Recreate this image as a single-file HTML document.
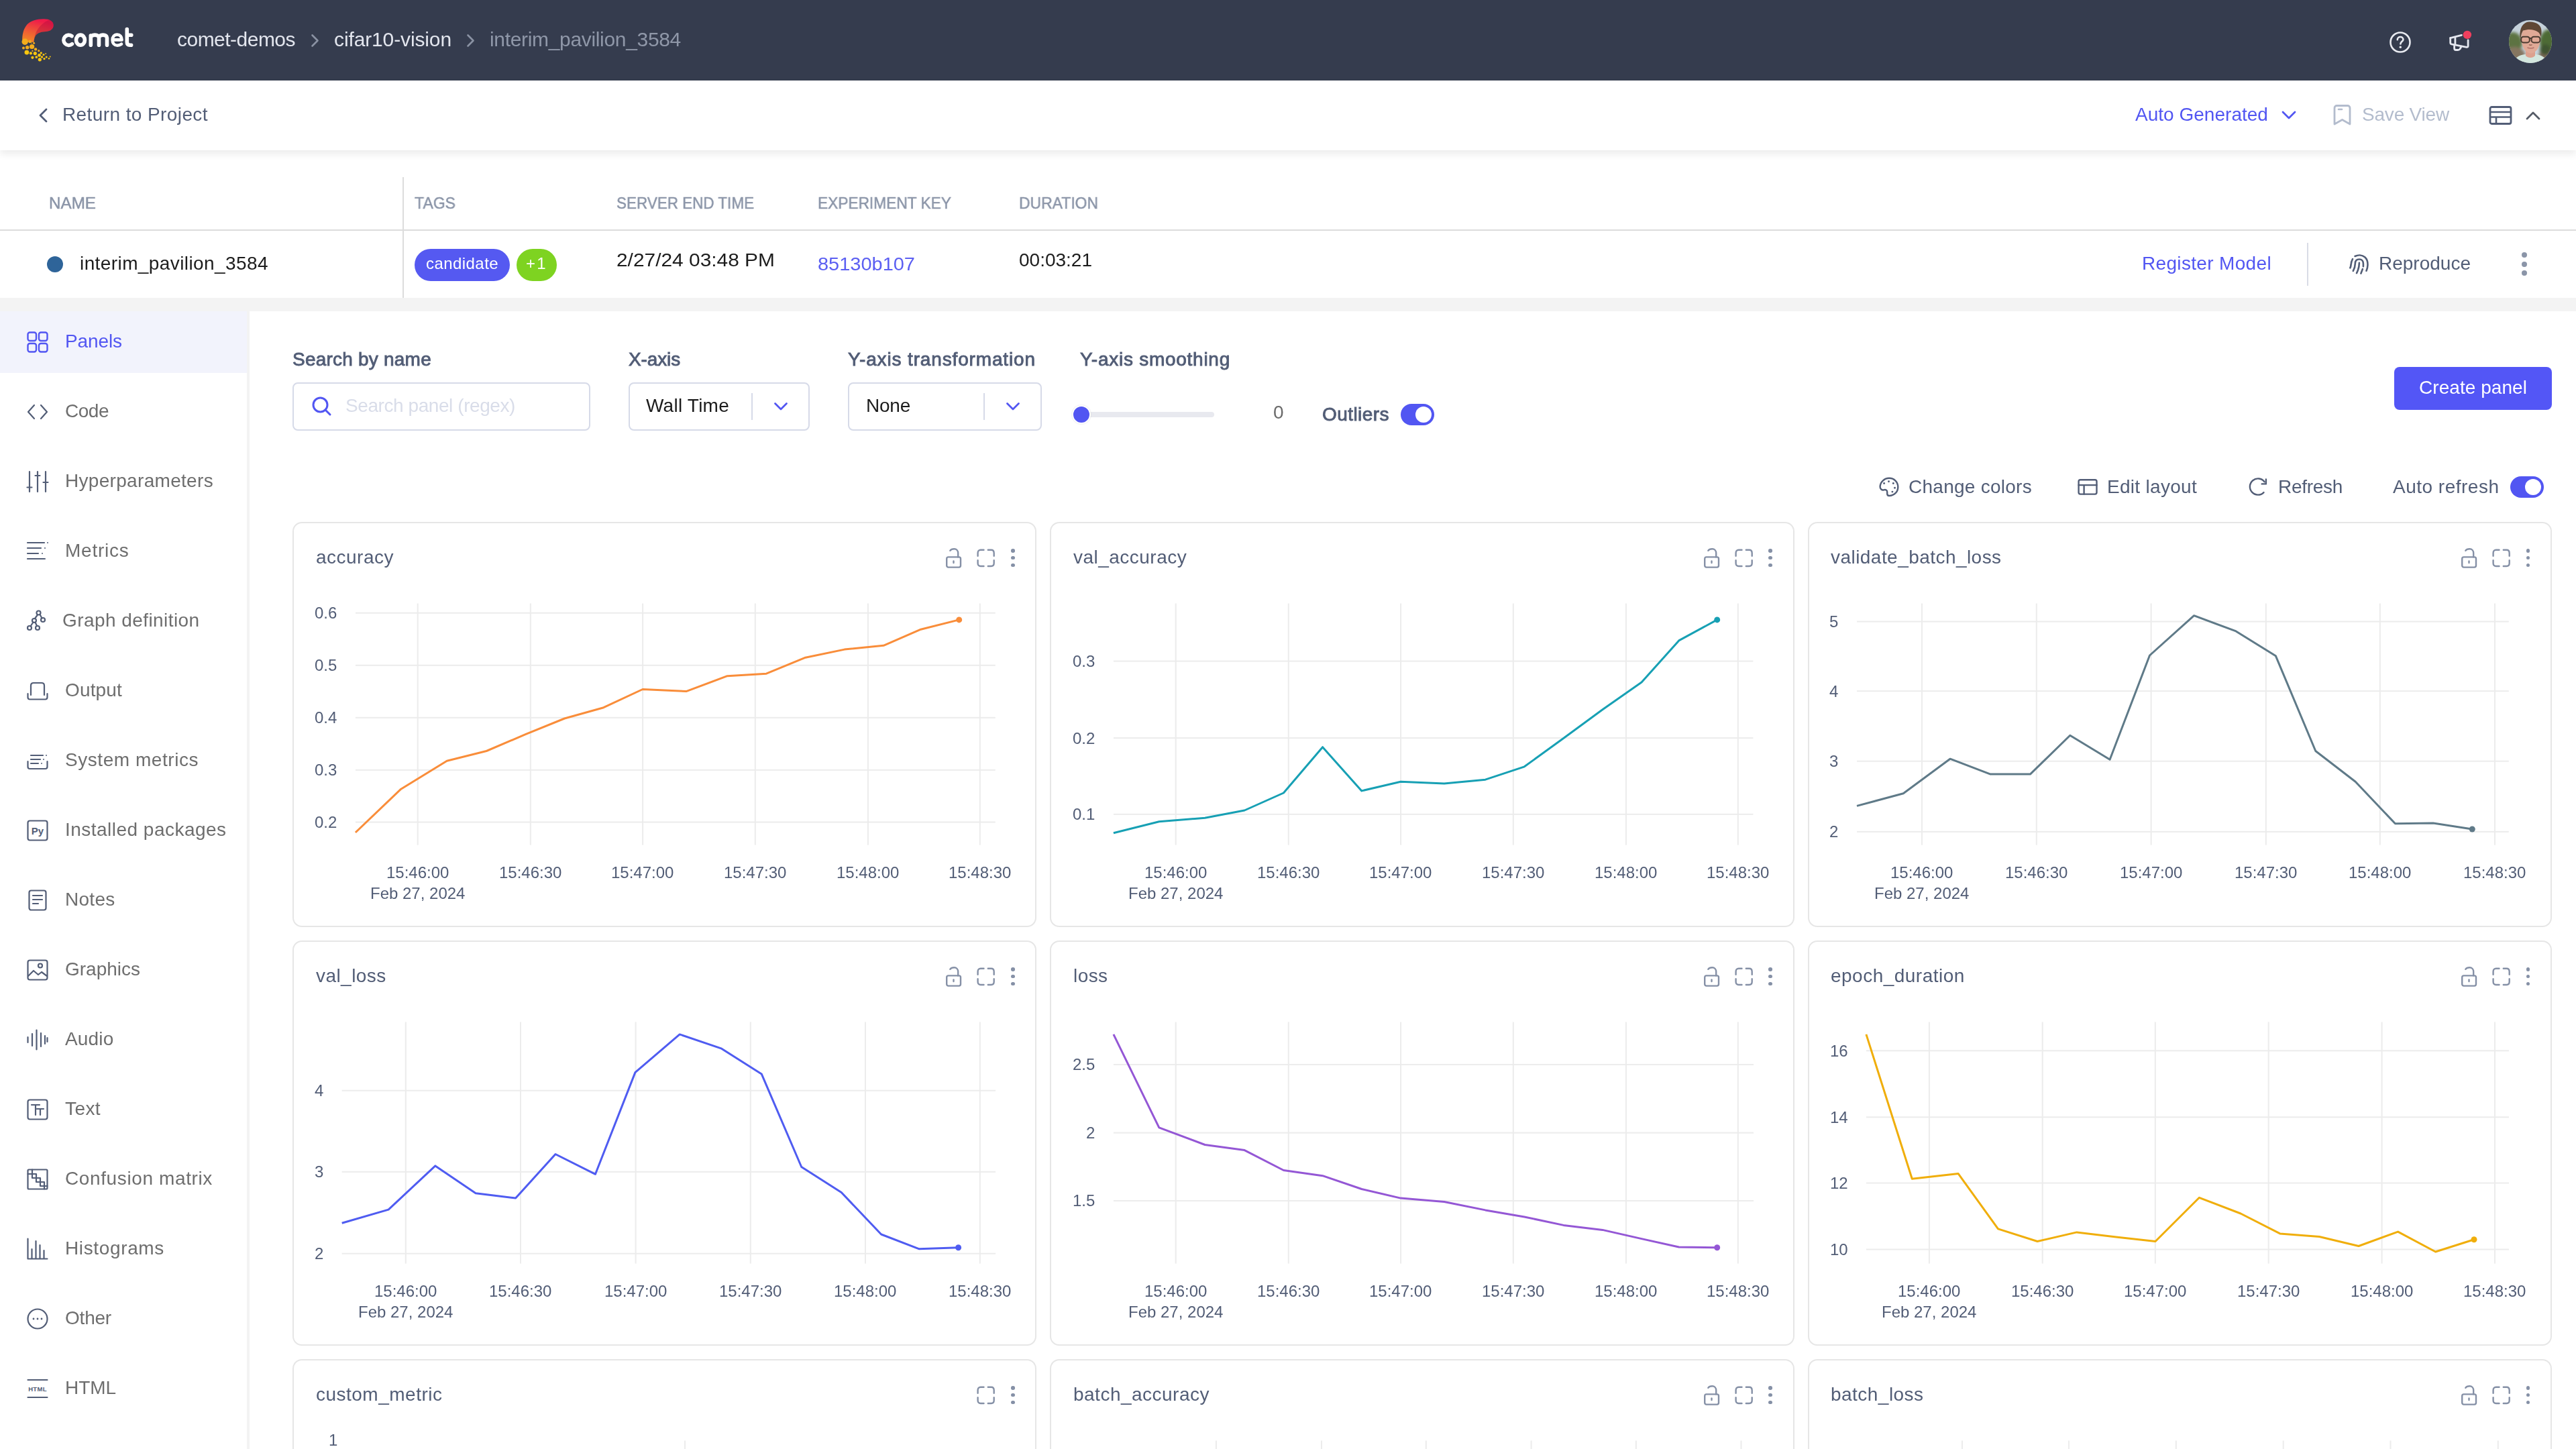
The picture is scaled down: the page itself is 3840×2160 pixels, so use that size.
<!DOCTYPE html>
<html><head><meta charset="utf-8"><title>Comet</title>
<style>
html,body{margin:0;padding:0;}
@media (max-width:1921px){html{zoom:0.5;}}
body{width:3840px;height:2160px;overflow:hidden;position:relative;background:#fff;font-family:"Liberation Sans",sans-serif;}
.a{position:absolute;}
.t{position:absolute;white-space:nowrap;will-change:transform;}
svg.a{overflow:visible;}
</style></head><body>
<div class="a" style="left:0px;top:0px;width:3840px;height:120px;background:#353c4e;"></div>
<svg class="a" style="left:0px;top:0px;" width="100" height="100" viewBox="0 0 100 100" fill="none"><defs><linearGradient id="lg" x1="0" y1="1" x2="0.35" y2="0"><stop offset="0" stop-color="#f39121"/><stop offset="0.5" stop-color="#ef5a35"/><stop offset="1" stop-color="#ee1b4a"/></linearGradient></defs><path d="M33.2 62 C33 52 34.5 44 40 37 C45 31 54 28.2 65.3 28.2 C73.5 28.2 79.7 31.5 79.7 37.5 C79.7 43 75.5 46.5 69 46.9 C60 47.2 54.5 49.5 52.5 54 C51 57 50.6 60 50.4 63 Z" fill="url(#lg)"/><path d="M72.7 29.5 C78 31 79.7 34 79.7 37.5 C79.7 43 75.5 46.5 69 46.9 C60 47.2 54.5 49.5 52.5 54 C51.5 56 51 58 50.8 60 C52 48 58 37 72.7 29.5 Z" fill="#b5103c" opacity="0.45"/><circle cx="37.2" cy="62.3" r="4.7" fill="#f3ad1d"/><circle cx="44.6" cy="62" r="2.2" fill="#f3ad1d"/><circle cx="50.6" cy="64.2" r="1.5" fill="#f3ad1d"/><circle cx="47.1" cy="64.2" r="0.8" fill="#f3ad1d"/><circle cx="35" cy="71.4" r="2" fill="#f3ad1d"/><circle cx="40.7" cy="70.7" r="2.7" fill="#f3ad1d"/><circle cx="47.6" cy="69.5" r="3.6" fill="#f3ad1d"/><circle cx="53.1" cy="73.4" r="2.2" fill="#f3ad1d"/><circle cx="48.4" cy="75.9" r="1.1" fill="#f3ad1d"/><circle cx="57.8" cy="75.7" r="1.6" fill="#f3ad1d"/><circle cx="39.9" cy="78.1" r="3.4" fill="#fbc70f"/><circle cx="45.9" cy="79.4" r="2.1" fill="#fbc70f"/><circle cx="52.3" cy="79.6" r="2.6" fill="#fbc70f"/><circle cx="61.3" cy="78.9" r="1.6" fill="#fbc70f"/><circle cx="68.2" cy="79.9" r="0.9" fill="#fbc70f"/><circle cx="58.6" cy="82.4" r="2.4" fill="#fbc70f"/><circle cx="65" cy="81.4" r="1.5" fill="#fbc70f"/><circle cx="54.3" cy="85.1" r="1.9" fill="#fbc70f"/><circle cx="62.5" cy="84.9" r="1.7" fill="#fbc70f"/><circle cx="69.2" cy="85.1" r="1.5" fill="#fbc70f"/><circle cx="74.7" cy="84.4" r="1.0" fill="#fbc70f"/><circle cx="48.4" cy="85.8" r="2.1" fill="#fbc70f"/><circle cx="59.3" cy="88.8" r="2.6" fill="#fbc70f"/><circle cx="66" cy="87.6" r="1.6" fill="#fbc70f"/><circle cx="73" cy="87.3" r="1.2" fill="#fbc70f"/></svg>
<svg class="a" style="left:88px;top:36px;" width="116" height="40" viewBox="0 0 116 40" fill="none"><g stroke="#ffffff" stroke-width="5.6" fill="none" stroke-linecap="round" stroke-linejoin="round"><path d="M19 17.8 A7.6 7.5 0 1 0 19.4 29.6"/><ellipse cx="31.95" cy="23.65" rx="6.45" ry="7.55"/><path d="M47.3 31.2 L47.3 17 M47.3 20.5 C47.3 17.8 49.5 16.1 53.4 16.1 C57.3 16.1 59.5 17.8 59.5 20.5 L59.5 31.2 M59.5 20.5 C59.5 17.8 61.7 16.1 65.5 16.1 C69.3 16.1 71.5 17.8 71.5 20.5 L71.5 31.2"/><path d="M79.8 23.4 L93.6 23.4 C93.6 18.8 90.8 15.6 86.65 15.6 C82.5 15.6 79.6 19 79.6 23.65 C79.6 28.5 82.6 31.7 87 31.7 C89.5 31.7 91.5 31 93 29.8" stroke-width="4.6"/><path d="M101.3 7.5 L101.3 26.5 C101.3 29.8 103 31.3 105.5 31.3 L107.6 31.3 M101.3 16.2 L107.8 16.2"/></g></svg>
<div class="t" style="left:264.00px;top:43.61px;font-size:30px;line-height:30px;color:#e3e6ee;letter-spacing:-0.520px;">comet-demos</div>
<svg class="a" style="left:464px;top:51px;" width="12" height="20" viewBox="0 0 12 20" fill="none"><path d="M1.5 1.5 L9.5 9.5 L1.5 17.5" stroke="#8a92a3" stroke-width="2.6" stroke-linecap="round" stroke-linejoin="round"/></svg>
<div class="t" style="left:498.00px;top:43.61px;font-size:30px;line-height:30px;color:#e3e6ee;letter-spacing:-0.125px;">cifar10-vision</div>
<svg class="a" style="left:696px;top:51px;" width="12" height="20" viewBox="0 0 12 20" fill="none"><path d="M1.5 1.5 L9.5 9.5 L1.5 17.5" stroke="#8a92a3" stroke-width="2.6" stroke-linecap="round" stroke-linejoin="round"/></svg>
<div class="t" style="left:730.00px;top:43.61px;font-size:30px;line-height:30px;color:#8f97a8;letter-spacing:-0.329px;">interim_pavilion_3584</div>
<svg class="a" style="left:3561px;top:46px;" width="34" height="34" viewBox="0 0 34 34" fill="none"><circle cx="17" cy="17" r="14.5" stroke="#e8eaf0" stroke-width="2.6"/><path d="M12.8 13.2 C12.8 10.6 14.8 9 17.2 9 C19.6 9 21.4 10.7 21.4 12.9 C21.4 15.6 17.4 16 17.4 19.4" stroke="#e8eaf0" stroke-width="2.6" stroke-linecap="round"/><circle cx="17.3" cy="24.2" r="1.7" fill="#e8eaf0"/></svg>
<svg class="a" style="left:3640px;top:40px;" width="50" height="45" viewBox="0 0 50 45" fill="none"><g stroke="#e4e7ef" stroke-width="2.8" fill="none" stroke-linecap="round" stroke-linejoin="round"><path d="M12.7 16.7 L29.5 12.4"/><path d="M12.7 16.7 L12.7 23.5 Q12.7 25.4 14.5 25.9 L37 30.4 Q39.1 30.5 39.1 28.5 L39.1 19.8"/><path d="M19.9 16 L19.9 26.5"/><path d="M18.6 27 L18.6 32 Q18.6 34.5 21 34.5 L24 34.5 Q26 34.5 27 33 L29.2 29.3"/></g><circle cx="37.9" cy="11.9" r="6.2" fill="#ef3f5e"/></svg>
<svg class="a" style="left:3740px;top:30px;" width="64" height="64" viewBox="0 0 64 64" fill="none"><defs><clipPath id="avc"><circle cx="32" cy="32" r="32"/></clipPath><filter id="avb" x="-20%" y="-20%" width="140%" height="140%"><feGaussianBlur stdDeviation="2.2"/></filter><filter id="avf" x="-10%" y="-10%" width="120%" height="120%"><feGaussianBlur stdDeviation="0.5"/></filter></defs><g clip-path="url(#avc)"><rect width="64" height="64" fill="#c6d2db"/><g filter="url(#avb)"><ellipse cx="6" cy="34" rx="14" ry="16" fill="#5d7342"/><ellipse cx="60" cy="32" rx="14" ry="18" fill="#4e6a36"/><ellipse cx="8" cy="52" rx="16" ry="12" fill="#857660"/><ellipse cx="58" cy="54" rx="14" ry="10" fill="#7c6a58"/><ellipse cx="54" cy="44" rx="8" ry="8" fill="#3f5530"/></g><g filter="url(#avf)"><path d="M4 66 C7 56 16 52 24 51 L40 51 C48 52 57 56 60 66 Z" fill="#d3e6de"/><path d="M25 44 L25 53 C28 57 36 57 39 53 L39 44 Z" fill="#dca08e"/><path d="M18.5 26 C18.5 14 24 11 32.5 11 C41 11 46.8 15 46.8 26 C46.8 40 40.5 49.5 32.5 49.5 C24.5 49.5 18.5 40 18.5 26 Z" fill="#e0a996"/><path d="M16.5 25 C15.5 12 21 3 30 2.5 C40 2 48.5 7 48.5 16 C48.6 20 48.4 23 47.5 25 C46.5 21 45 18.5 43 17.5 C38 14 30 12.5 21 15.5 C19.5 18 18 22 17.5 27 Z" fill="#5e4636"/><g stroke="#4b3a30" stroke-width="2" fill="none"><rect x="18.2" y="24.8" width="12.6" height="8.6" rx="3.5"/><rect x="33.6" y="24.8" width="12.8" height="8.6" rx="3.5"/><path d="M30.8 27 L33.6 27"/></g><path d="M30 36.5 C31.5 37.5 33 37.5 34.5 36.5" stroke="#8f5f52" stroke-width="1.4" fill="none"/><path d="M27.5 41 C30.5 42.2 34.5 42.2 37.5 41" stroke="#b0736a" stroke-width="1.6" fill="none"/></g></g></svg>
<div class="a" style="left:0;top:120px;width:3840px;height:104px;background:#fff;box-shadow:0 6px 10px rgba(0,0,0,0.075);z-index:2"></div>
<svg class="a" style="left:56px;top:160px;z-index:3" width="18" height="24" viewBox="0 0 18 24" fill="none"><path d="M13 3 L4 12 L13 21" stroke="#525d76" stroke-width="2.8" stroke-linecap="round" stroke-linejoin="round"/></svg>
<div class="t" style="left:92.50px;top:157.30px;font-size:28px;line-height:28px;color:#525d76;letter-spacing:0.403px;z-index:3">Return to Project</div>
<div class="t" style="left:3183.00px;top:156.80px;font-size:28px;line-height:28px;color:#5256f2;letter-spacing:0.018px;z-index:3">Auto Generated</div>
<svg class="a" style="left:3400px;top:163px;z-index:3" width="24" height="18" viewBox="0 0 24 18" fill="none"><path d="M3 4 L12 13 L21 4" stroke="#5256f2" stroke-width="2.8" stroke-linecap="round" stroke-linejoin="round"/></svg>
<svg class="a" style="left:3476px;top:155px;z-index:3" width="32" height="34" viewBox="0 0 32 34" fill="none"><path d="M4 6 C4 4 5.5 2.5 7.5 2.5 L23.5 2.5 C25.5 2.5 27 4 27 6 L27 30 L15.5 23.5 L4 30 Z" stroke="#b3bccd" stroke-width="2.8" stroke-linejoin="round"/><path d="M10 8 L15 8" stroke="#b3bccd" stroke-width="2.6" stroke-linecap="round"/></svg>
<div class="t" style="left:3520.50px;top:156.80px;font-size:28px;line-height:28px;color:#b3bccd;letter-spacing:-0.200px;z-index:3">Save View</div>
<svg class="a" style="left:3710px;top:157px;z-index:3" width="36" height="30" viewBox="0 0 36 30" fill="none"><rect x="2" y="2.5" width="31" height="25" rx="2.5" stroke="#525d76" stroke-width="2.8"/><path d="M2 10 L33 10 M2 17.5 L33 17.5 M11 17.5 L11 27.5" stroke="#525d76" stroke-width="2.6"/></svg>
<svg class="a" style="left:3764px;top:164px;z-index:3" width="24" height="16" viewBox="0 0 24 16" fill="none"><path d="M3 13 L12 4 L21 13" stroke="#555b66" stroke-width="2.8" stroke-linecap="round" stroke-linejoin="round"/></svg>
<div class="t" style="left:72.50px;top:290.68px;font-size:24px;line-height:24px;color:#8b95a8;-webkit-text-stroke:0.5px #8b95a8;transform:scaleX(1.0092);transform-origin:0 0;">NAME</div>
<div class="t" style="left:618.00px;top:290.68px;font-size:24px;line-height:24px;color:#8b95a8;-webkit-text-stroke:0.5px #8b95a8;transform:scaleX(0.9594);transform-origin:0 0;">TAGS</div>
<div class="t" style="left:919.00px;top:290.68px;font-size:24px;line-height:24px;color:#8b95a8;-webkit-text-stroke:0.5px #8b95a8;transform:scaleX(0.9352);transform-origin:0 0;">SERVER END TIME</div>
<div class="t" style="left:1219.00px;top:290.68px;font-size:24px;line-height:24px;color:#8b95a8;-webkit-text-stroke:0.5px #8b95a8;transform:scaleX(0.9461);transform-origin:0 0;">EXPERIMENT KEY</div>
<div class="t" style="left:1519.00px;top:290.68px;font-size:24px;line-height:24px;color:#8b95a8;-webkit-text-stroke:0.5px #8b95a8;transform:scaleX(0.9551);transform-origin:0 0;">DURATION</div>
<div class="a" style="left:0px;top:342px;width:3840px;height:2px;background:#dcdcdc;"></div>
<div class="a" style="left:600px;top:264px;width:2px;height:180px;background:#dcdcdc;"></div>
<div class="a" style="left:70px;top:382px;width:24px;height:24px;border-radius:50%;background:#2e6499"></div>
<div class="t" style="left:119.00px;top:379.30px;font-size:28px;line-height:28px;color:#1c1c1c;letter-spacing:0.406px;">interim_pavilion_3584</div>
<div class="a" style="left:618px;top:371px;width:142px;height:48px;border-radius:24px;background:#5559f1"></div>
<div class="t" style="left:635.00px;top:380.68px;font-size:24px;line-height:24px;color:#ffffff;letter-spacing:0.438px;">candidate</div>
<div class="a" style="left:770px;top:371px;width:60px;height:48px;border-radius:24px;background:#7ed321"></div>
<div class="t" style="left:784.00px;top:380.68px;font-size:24px;line-height:24px;color:#ffffff;letter-spacing:2.320px;">+1</div>
<div class="t" style="left:919.00px;top:373.80px;font-size:28px;line-height:28px;color:#1c1c1c;transform:scaleX(1.0673);transform-origin:0 0;">2/27/24 03:48 PM</div>
<div class="t" style="left:1219.00px;top:379.80px;font-size:28px;line-height:28px;color:#5b5ff2;transform:scaleX(1.0342);transform-origin:0 0;">85130b107</div>
<div class="t" style="left:1519.00px;top:373.80px;font-size:28px;line-height:28px;color:#1c1c1c;transform:scaleX(0.9997);transform-origin:0 0;">00:03:21</div>
<div class="t" style="left:3193.00px;top:379.30px;font-size:28px;line-height:28px;color:#5256f2;letter-spacing:0.333px;">Register Model</div>
<div class="a" style="left:3439px;top:362px;width:2px;height:64px;background:#d9dce6;"></div>
<svg class="a" style="left:3490px;top:360px;" width="70" height="60" viewBox="0 0 70 60" fill="none"><g stroke="#525d76" stroke-width="2.6" stroke-linecap="round" fill="none"><path d="M20.5 22 C25 19.8 31 19.8 35.2 23.2 C38.5 26 39.6 30 39.5 35 C39.4 38.5 38.7 41 37.5 43.7"/><path d="M17 26.1 C15.6 28.5 14.8 31.5 14.6 34.5 C14.4 36.5 14 38 13.3 39.4"/><path d="M17.8 43.9 C19.8 40.5 20.7 37.5 20.8 33 C20.8 29 23 26.5 26.9 26.5 C30.8 26.5 32.9 29.5 32.9 33 L32.9 37.3"/><path d="M26.9 31.9 C26.8 36 26.2 39.5 25 42.5 C24.3 44.3 23.7 45.8 23 47.2"/><path d="M31.9 41 L29.4 47.6"/></g></svg>
<div class="t" style="left:3546.00px;top:379.30px;font-size:28px;line-height:28px;color:#525d76;letter-spacing:-0.002px;">Reproduce</div>
<div class="a" style="left:3759px;top:376px;width:8px;height:8px;border-radius:50%;background:#8b95a8"></div>
<div class="a" style="left:3759px;top:390px;width:8px;height:8px;border-radius:50%;background:#8b95a8"></div>
<div class="a" style="left:3759px;top:403px;width:8px;height:8px;border-radius:50%;background:#8b95a8"></div>
<div class="a" style="left:0px;top:444px;width:3840px;height:20px;background:#f3f3f3;"></div>
<div class="a" style="left:368px;top:464px;width:4px;height:1696px;background:#f3f3f3;"></div>
<div class="a" style="left:0px;top:464px;width:368px;height:92px;background:#f2f3fc;"></div>
<svg class="a" style="left:40px;top:494px;" width="32" height="32" viewBox="0 0 32 32" fill="none"><g stroke="#5256f2" stroke-width="2.4" fill="none"><rect x="1.5" y="1.5" width="12.5" height="12.5" rx="3"/><rect x="18" y="1.5" width="12.5" height="12.5" rx="3"/><rect x="1.5" y="18" width="12.5" height="12.5" rx="3"/><rect x="18" y="18" width="12.5" height="12.5" rx="3"/></g></svg>
<div class="t" style="left:97.00px;top:495.05px;font-size:28px;line-height:28px;color:#5256f2;letter-spacing:-0.104px;">Panels</div>
<svg class="a" style="left:40px;top:598px;" width="32" height="32" viewBox="0 0 32 32" fill="none"><path d="M11 6 L2 16 L11 26 M21 6 L30 16 L21 26" stroke="#525d76" stroke-width="2.2" fill="none" stroke-linecap="round" stroke-linejoin="round" stroke-width="2.6"/></svg>
<div class="t" style="left:97.00px;top:599.05px;font-size:28px;line-height:28px;color:#6e6e6e;letter-spacing:-0.488px;">Code</div>
<svg class="a" style="left:40px;top:702px;" width="32" height="32" viewBox="0 0 32 32" fill="none"><path d="M4 1 L4 31 M16 1 L16 31 M28 1 L28 31 M0.5 24.5 L7.5 24.5 M12.5 7 L19.5 7 M24.5 17 L31.5 17" stroke="#525d76" stroke-width="2.2" fill="none" stroke-linecap="round" stroke-linejoin="round" stroke-linecap="butt"/></svg>
<div class="t" style="left:97.00px;top:703.05px;font-size:28px;line-height:28px;color:#6e6e6e;letter-spacing:0.309px;">Hyperparameters</div>
<svg class="a" style="left:40px;top:806px;" width="32" height="32" viewBox="0 0 32 32" fill="none"><path d="M1 3 L26 3 M1 11 L21 11 M1 19 L17 19 M1 27 L26 27" stroke="#525d76" stroke-width="2.2" fill="none" stroke-linecap="round" stroke-linejoin="round" stroke-width="2.6" stroke-linecap="butt"/><circle cx="31" cy="3" r="1" fill="#525d76"/><circle cx="27" cy="11" r="1" fill="#525d76"/><circle cx="23" cy="19" r="1" fill="#525d76"/><circle cx="27" cy="27" r="1" fill="#525d76"/></svg>
<div class="t" style="left:97.00px;top:807.05px;font-size:28px;line-height:28px;color:#6e6e6e;letter-spacing:0.752px;">Metrics</div>
<svg class="a" style="left:40px;top:910px;" width="32" height="32" viewBox="0 0 32 32" fill="none"><g stroke="#525d76" stroke-width="2.2" fill="none" stroke-linecap="round" stroke-linejoin="round" stroke-width="2"><circle cx="17.5" cy="3.5" r="3"/><circle cx="24" cy="14" r="3"/><circle cx="11" cy="15" r="3"/><circle cx="4" cy="26" r="3"/><circle cx="16" cy="26" r="3"/><path d="M16 6.5 L12 12 M19.5 6 L22.5 11.5 M9.5 17.5 L5.5 23.5 M12.5 17.5 L15 23"/></g></svg>
<div class="t" style="left:93.00px;top:911.05px;font-size:28px;line-height:28px;color:#6e6e6e;letter-spacing:0.429px;">Graph definition</div>
<svg class="a" style="left:40px;top:1014px;" width="32" height="32" viewBox="0 0 32 32" fill="none"><path d="M6 22 L6 8 C6 5.5 7.5 4 10 4 L22 4 C24.5 4 26 5.5 26 8 L26 22 M1.5 20 L1.5 25.5 C1.5 27.5 2.8 28.5 4.5 28.5 L27.5 28.5 C29.2 28.5 30.5 27.5 30.5 25.5 L30.5 20" stroke="#525d76" stroke-width="2.2" fill="none" stroke-linecap="round" stroke-linejoin="round"/></svg>
<div class="t" style="left:97.00px;top:1015.05px;font-size:28px;line-height:28px;color:#6e6e6e;letter-spacing:0.154px;">Output</div>
<svg class="a" style="left:40px;top:1118px;" width="32" height="32" viewBox="0 0 32 32" fill="none"><path d="M6 8 L24 8 M6 14 L20 14 M6 20 L17 20" stroke="#525d76" stroke-width="2.2" fill="none" stroke-linecap="round" stroke-linejoin="round" stroke-linecap="butt"/><path d="M1.5 17 L1.5 25 C1.5 27 2.8 28 4.5 28 L27.5 28 C29.2 28 30.5 27 30.5 25 L30.5 17" stroke="#525d76" stroke-width="2.2" fill="none" stroke-linecap="round" stroke-linejoin="round"/><circle cx="29" cy="8" r="1" fill="#525d76"/><circle cx="25" cy="14" r="1" fill="#525d76"/><circle cx="22" cy="20" r="1" fill="#525d76"/></svg>
<div class="t" style="left:97.00px;top:1119.05px;font-size:28px;line-height:28px;color:#6e6e6e;letter-spacing:0.545px;">System metrics</div>
<svg class="a" style="left:40px;top:1222px;" width="32" height="32" viewBox="0 0 32 32" fill="none"><rect x="1.5" y="1.5" width="29" height="29" rx="3" stroke="#525d76" stroke-width="2.2" fill="none" stroke-linecap="round" stroke-linejoin="round"/><text x="16" y="22" text-anchor="middle" font-family="Liberation Sans" font-weight="700" font-size="15" fill="#525d76">Py</text></svg>
<div class="t" style="left:97.00px;top:1223.05px;font-size:28px;line-height:28px;color:#6e6e6e;letter-spacing:0.479px;">Installed packages</div>
<svg class="a" style="left:40px;top:1326px;" width="32" height="32" viewBox="0 0 32 32" fill="none"><rect x="3.5" y="1.5" width="25" height="29" rx="3" stroke="#525d76" stroke-width="2.2" fill="none" stroke-linecap="round" stroke-linejoin="round"/><path d="M9 9 L23 9 M9 15 L23 15 M9 21 L17 21" stroke="#525d76" stroke-width="2.2" fill="none" stroke-linecap="round" stroke-linejoin="round"/></svg>
<div class="t" style="left:97.00px;top:1327.05px;font-size:28px;line-height:28px;color:#6e6e6e;letter-spacing:0.269px;">Notes</div>
<svg class="a" style="left:40px;top:1430px;" width="32" height="32" viewBox="0 0 32 32" fill="none"><rect x="1.5" y="1.5" width="29" height="29" rx="3" stroke="#525d76" stroke-width="2.2" fill="none" stroke-linecap="round" stroke-linejoin="round"/><path d="M2 25 L10 17 L17 23 L22 19 L30 25" stroke="#525d76" stroke-width="2.2" fill="none" stroke-linecap="round" stroke-linejoin="round"/><circle cx="20" cy="9.5" r="3" stroke="#525d76" stroke-width="2.2" fill="none" stroke-linecap="round" stroke-linejoin="round"/></svg>
<div class="t" style="left:97.00px;top:1431.05px;font-size:28px;line-height:28px;color:#6e6e6e;letter-spacing:-0.008px;">Graphics</div>
<svg class="a" style="left:40px;top:1534px;" width="32" height="32" viewBox="0 0 32 32" fill="none"><path d="M1.5 12 L1.5 20 M8 7 L8 25 M14.5 1.5 L14.5 30.5 M21 6 L21 26 M27 10 L27 22 M30.5 13 L30.5 19" stroke="#525d76" stroke-width="2.2" fill="none" stroke-linecap="round" stroke-linejoin="round" stroke-linecap="butt"/></svg>
<div class="t" style="left:97.00px;top:1535.05px;font-size:28px;line-height:28px;color:#6e6e6e;letter-spacing:0.175px;">Audio</div>
<svg class="a" style="left:40px;top:1638px;" width="32" height="32" viewBox="0 0 32 32" fill="none"><rect x="1.5" y="1.5" width="29" height="29" rx="3" stroke="#525d76" stroke-width="2.2" fill="none" stroke-linecap="round" stroke-linejoin="round"/><path d="M7 9 L19 9 M13 9 L13 24 M15 15 L25 15 M20 15 L20 24" stroke="#525d76" stroke-width="2.2" fill="none" stroke-linecap="round" stroke-linejoin="round"/></svg>
<div class="t" style="left:97.00px;top:1639.05px;font-size:28px;line-height:28px;color:#6e6e6e;letter-spacing:0.410px;">Text</div>
<svg class="a" style="left:40px;top:1742px;" width="32" height="32" viewBox="0 0 32 32" fill="none"><rect x="1.5" y="1.5" width="29" height="29" rx="1.5" stroke="#525d76" stroke-width="2.2" fill="none" stroke-linecap="round" stroke-linejoin="round"/><path d="M1.5 8 L8 8 L8 1.5 M8 8 L8 14 L14 14 L14 20 L20 20 L20 26 L26 26 L26 30.5 M1.5 8 L1.5 8 M8 14 L8 8 M14 14 L14 8 L8 8 M20 20 L20 14 L14 14 M26 26 L26 20 L20 20 M30.5 26 L26 26" stroke="#525d76" stroke-width="2.2" fill="none" stroke-linecap="round" stroke-linejoin="round" stroke-width="2" stroke-linecap="butt"/></svg>
<div class="t" style="left:97.00px;top:1743.05px;font-size:28px;line-height:28px;color:#6e6e6e;letter-spacing:0.617px;">Confusion matrix</div>
<svg class="a" style="left:40px;top:1846px;" width="32" height="32" viewBox="0 0 32 32" fill="none"><path d="M1.5 0.5 L1.5 30.5 L30.5 30.5 M7.5 30 L7.5 16 M13.5 30 L13.5 4 M19.5 30 L19.5 10 M25.5 30 L25.5 18" stroke="#525d76" stroke-width="2.2" fill="none" stroke-linecap="round" stroke-linejoin="round" stroke-linecap="butt"/></svg>
<div class="t" style="left:97.00px;top:1847.05px;font-size:28px;line-height:28px;color:#6e6e6e;letter-spacing:0.639px;">Histograms</div>
<svg class="a" style="left:40px;top:1950px;" width="32" height="32" viewBox="0 0 32 32" fill="none"><circle cx="16" cy="16" r="14.5" stroke="#525d76" stroke-width="2.2" fill="none" stroke-linecap="round" stroke-linejoin="round"/><circle cx="10" cy="16" r="1.4" fill="#525d76"/><circle cx="16" cy="16" r="1.4" fill="#525d76"/><circle cx="22" cy="16" r="1.4" fill="#525d76"/></svg>
<div class="t" style="left:97.00px;top:1951.05px;font-size:28px;line-height:28px;color:#6e6e6e;letter-spacing:-0.209px;">Other</div>
<svg class="a" style="left:40px;top:2054px;" width="32" height="32" viewBox="0 0 32 32" fill="none"><path d="M1.5 3 L30.5 3 M1.5 29 L30.5 29" stroke="#525d76" stroke-width="2.2" fill="none" stroke-linecap="round" stroke-linejoin="round" stroke-linecap="butt"/><text x="16" y="20" text-anchor="middle" font-family="Liberation Sans" font-weight="700" font-size="9.5" fill="#525d76" letter-spacing="0.3">HTML</text></svg>
<div class="t" style="left:97.00px;top:2055.05px;font-size:28px;line-height:28px;color:#6e6e6e;letter-spacing:-0.059px;">HTML</div>
<div class="t" style="left:436.00px;top:521.80px;font-size:28px;line-height:28px;color:#525d76;-webkit-text-stroke:0.9px #525d76;letter-spacing:0.219px;">Search by name</div>
<div class="t" style="left:937.00px;top:521.80px;font-size:28px;line-height:28px;color:#525d76;-webkit-text-stroke:0.9px #525d76;letter-spacing:-0.133px;">X-axis</div>
<div class="t" style="left:1264.00px;top:521.80px;font-size:28px;line-height:28px;color:#525d76;-webkit-text-stroke:0.9px #525d76;letter-spacing:0.856px;">Y-axis transformation</div>
<div class="t" style="left:1610.00px;top:521.80px;font-size:28px;line-height:28px;color:#525d76;-webkit-text-stroke:0.9px #525d76;letter-spacing:0.735px;">Y-axis smoothing</div>
<div class="a" style="left:436px;top:570px;width:444px;height:72px;border:2px solid #d6dae8;border-radius:8px;box-sizing:border-box;background:#fff;"></div>
<svg class="a" style="left:464px;top:590px;" width="32" height="32" viewBox="0 0 32 32" fill="none"><circle cx="13.5" cy="13.5" r="10.5" stroke="#5256f2" stroke-width="3"/><path d="M21 21 L28 28" stroke="#5256f2" stroke-width="3" stroke-linecap="round"/></svg>
<div class="t" style="left:515.00px;top:591.30px;font-size:28px;line-height:28px;color:#d9dde9;letter-spacing:-0.427px;">Search panel (regex)</div>
<div class="a" style="left:937px;top:570px;width:270px;height:72px;border:2px solid #d6dae8;border-radius:8px;box-sizing:border-box;background:#fff;"></div>
<div class="t" style="left:963.00px;top:591.30px;font-size:28px;line-height:28px;color:#1c1c1c;letter-spacing:0.234px;">Wall Time</div>
<div class="a" style="left:1120px;top:586px;width:2px;height:40px;background:#d6dae8;"></div>
<svg class="a" style="left:1153px;top:599px;" width="22" height="14" viewBox="0 0 22 14" fill="none"><path d="M2.5 2.5 L11 11 L19.5 2.5" stroke="#5256f2" stroke-width="2.8" stroke-linecap="round" stroke-linejoin="round"/></svg>
<div class="a" style="left:1264px;top:570px;width:289px;height:72px;border:2px solid #d6dae8;border-radius:8px;box-sizing:border-box;background:#fff;"></div>
<div class="t" style="left:1291.00px;top:591.30px;font-size:28px;line-height:28px;color:#1c1c1c;letter-spacing:-0.238px;">None</div>
<div class="a" style="left:1466px;top:586px;width:2px;height:40px;background:#d6dae8;"></div>
<svg class="a" style="left:1499px;top:599px;" width="22" height="14" viewBox="0 0 22 14" fill="none"><path d="M2.5 2.5 L11 11 L19.5 2.5" stroke="#5256f2" stroke-width="2.8" stroke-linecap="round" stroke-linejoin="round"/></svg>
<div class="a" style="left:1606px;top:614px;width:204px;height:8px;border-radius:4px;background:#e8e9ef"></div>
<div class="a" style="left:1598px;top:604px;width:28px;height:28px;border-radius:50%;background:#5256f2;border:2px solid #fff;box-sizing:border-box;box-shadow:0 0 2px rgba(0,0,0,0.15)"></div>
<div class="t" style="left:1898.00px;top:601.30px;font-size:28px;line-height:28px;color:#6b6b6b;">0</div>
<div class="t" style="left:1971.00px;top:604.30px;font-size:28px;line-height:28px;color:#525d76;-webkit-text-stroke:0.9px #525d76;letter-spacing:0.439px;">Outliers</div>
<div class="a" style="left:2088px;top:602px;width:50px;height:32px;border-radius:16px;background:#5256f2"></div>
<div class="a" style="left:2110px;top:606px;width:24px;height:24px;border-radius:50%;background:#fff"></div>
<div class="a" style="left:3569px;top:547px;width:235px;height:64px;border-radius:8px;background:#5356f6"></div>
<div class="t" style="left:3606.00px;top:563.80px;font-size:28px;line-height:28px;color:#ffffff;letter-spacing:0.052px;">Create panel</div>
<svg class="a" style="left:2790px;top:700px;" width="60" height="50" viewBox="0 0 60 50" fill="none"><path d="M26.2 39 C33.5 39 39.3 33.2 39.3 25.9 C39.3 18.6 33.5 12.8 26.2 12.8 C18.9 12.8 12.8 18.6 12.6 25.5 C12.5 29 15.5 31 18 30.3 C21 29.5 23.2 30.5 23.2 33.5 L23.2 36 C23.2 37.8 24.4 39 26.2 39 Z" stroke="#525d76" stroke-width="2.4" fill="none" stroke-linecap="round" stroke-linejoin="round"/><circle cx="18.6" cy="20.5" r="1.45" fill="#525d76"/><circle cx="25.5" cy="17.8" r="1.45" fill="#525d76"/><circle cx="32.3" cy="20.5" r="1.45" fill="#525d76"/><circle cx="34.5" cy="27.3" r="1.45" fill="#525d76"/><circle cx="30.9" cy="33.1" r="1.45" fill="#525d76"/></svg>
<div class="t" style="left:2845.00px;top:711.80px;font-size:28px;line-height:28px;color:#525d76;letter-spacing:0.262px;">Change colors</div>
<svg class="a" style="left:3090px;top:700px;" width="60" height="50" viewBox="0 0 60 50" fill="none"><rect x="8.6" y="15.2" width="26.9" height="21.4" rx="2.5" stroke="#525d76" stroke-width="2.4" fill="none" stroke-linecap="round" stroke-linejoin="round"/><path d="M8.6 23.1 L35.5 23.1 M16.6 23.1 L16.6 36.6" stroke="#525d76" stroke-width="2.4" fill="none" stroke-linecap="round" stroke-linejoin="round"/></svg>
<div class="t" style="left:3141.00px;top:711.80px;font-size:28px;line-height:28px;color:#525d76;letter-spacing:0.294px;">Edit layout</div>
<svg class="a" style="left:3340px;top:700px;" width="60" height="50" viewBox="0 0 60 50" fill="none"><path d="M35.6 18.2 A12.1 12.1 0 1 0 34.5 34.1" stroke="#525d76" stroke-width="2.4" fill="none" stroke-linecap="round" stroke-linejoin="round"/><path d="M37.9 14.5 L37.9 21.4 L31.7 21.4" stroke="#525d76" stroke-width="2.4" fill="none" stroke-linecap="round" stroke-linejoin="round"/></svg>
<div class="t" style="left:3396.00px;top:711.80px;font-size:28px;line-height:28px;color:#525d76;letter-spacing:-0.295px;">Refresh</div>
<div class="t" style="left:3566.50px;top:711.80px;font-size:28px;line-height:28px;color:#525d76;letter-spacing:0.495px;">Auto refresh</div>
<div class="a" style="left:3742px;top:710px;width:50px;height:32px;border-radius:16px;background:#5256f2"></div>
<div class="a" style="left:3764px;top:714px;width:24px;height:24px;border-radius:50%;background:#fff"></div>
<div class="a" style="left:436px;top:778px;width:1109.33px;height:604px;border:2px solid #e6e6e6;border-radius:14px;box-sizing:border-box;background:#fff"></div>
<div class="t" style="left:470.75px;top:817.30px;font-size:28px;line-height:28px;color:#525d76;letter-spacing:0.490px;">accuracy</div>
<svg class="a" style="left:1408.33px;top:816px;" width="28" height="32" viewBox="0 0 28 32" fill="none"><rect x="3.2" y="14.4" width="20.8" height="15.2" rx="2.5" stroke="#8590a6" stroke-width="2.4" fill="none" stroke-linecap="round" stroke-linejoin="round"/><path d="M8.3 4.8 C9.5 3 11.8 2.3 14.4 2.3 C17.8 2.3 20.2 5 20.2 8.6 L20.2 14.4" stroke="#8590a6" stroke-width="2.4" fill="none" stroke-linecap="round" stroke-linejoin="round"/><path d="M13.5 20.4 L13.5 23.1" stroke="#8590a6" stroke-width="2.4" fill="none" stroke-linecap="round" stroke-linejoin="round"/></svg>
<svg class="a" style="left:1455.33px;top:818px;" width="28" height="28" viewBox="0 0 28 28" fill="none"><path d="M2.6 10.7 L2.6 6.4 C2.6 3.6 4 1.8 6.8 1.8 L11.5 1.8 M17.8 1.8 L22.5 1.8 C25.3 1.8 26.7 3.6 26.7 6.4 L26.7 10.7 M26.7 17.2 L26.7 21.5 C26.7 24.3 25.3 26 22.5 26 L17.8 26 M11.5 26 L6.8 26 C4 26 2.6 24.3 2.6 21.5 L2.6 17.2" stroke="#8590a6" stroke-width="2.4" fill="none" stroke-linecap="round" stroke-linejoin="round"/></svg>
<div class="a" style="left:1507.03px;top:818.20px;width:5.6px;height:5.6px;border-radius:50%;background:#8590a6"></div>
<div class="a" style="left:1507.03px;top:828.90px;width:5.6px;height:5.6px;border-radius:50%;background:#8590a6"></div>
<div class="a" style="left:1507.03px;top:839.50px;width:5.6px;height:5.6px;border-radius:50%;background:#8590a6"></div>
<svg class="a" style="left:0;top:0" width="3840" height="2160" viewBox="0 0 3840 2160"><rect x="529.90" y="912.77" width="953.85" height="2" fill="#ececec"/><rect x="529.90" y="990.80" width="953.85" height="2" fill="#ececec"/><rect x="529.90" y="1068.83" width="953.85" height="2" fill="#ececec"/><rect x="529.90" y="1146.86" width="953.85" height="2" fill="#ececec"/><rect x="529.90" y="1224.50" width="953.85" height="2" fill="#ececec"/><rect x="621.70" y="899.50" width="2" height="360.10" fill="#ececec"/><rect x="789.80" y="899.50" width="2" height="360.10" fill="#ececec"/><rect x="957.10" y="899.50" width="2" height="360.10" fill="#ececec"/><rect x="1124.80" y="899.50" width="2" height="360.10" fill="#ececec"/><rect x="1292.90" y="899.50" width="2" height="360.10" fill="#ececec"/><rect x="1459.80" y="899.50" width="2" height="360.10" fill="#ececec"/><polyline points="529.9,1241.0 597.8,1176.2 666.2,1134.3 725.2,1119.5 783.4,1094.7 841.6,1071.0 899.8,1054.7 958.0,1027.5 1022.9,1030.6 1084.2,1007.7 1142.4,1004.2 1200.7,980.2 1258.9,968.1 1317.1,962.3 1372.7,938.2 1429.7,923.9" stroke="#f98d3a" stroke-width="3" fill="none" stroke-linejoin="round"/><circle cx="1429.7" cy="923.9" r="4.5" fill="#f98d3a"/></svg>
<div class="t" style="left:469.14px;top:902.21px;font-size:24px;line-height:24px;color:#525d76;">0.6</div>
<div class="t" style="left:469.14px;top:980.24px;font-size:24px;line-height:24px;color:#525d76;">0.5</div>
<div class="t" style="left:469.14px;top:1058.26px;font-size:24px;line-height:24px;color:#525d76;">0.4</div>
<div class="t" style="left:469.14px;top:1136.29px;font-size:24px;line-height:24px;color:#525d76;">0.3</div>
<div class="t" style="left:469.14px;top:1213.93px;font-size:24px;line-height:24px;color:#525d76;">0.2</div>
<div class="t" style="left:576.00px;top:1289.18px;font-size:24px;line-height:24px;color:#525d76;">15:46:00</div>
<div class="t" style="left:744.10px;top:1289.18px;font-size:24px;line-height:24px;color:#525d76;">15:46:30</div>
<div class="t" style="left:911.40px;top:1289.18px;font-size:24px;line-height:24px;color:#525d76;">15:47:00</div>
<div class="t" style="left:1079.10px;top:1289.18px;font-size:24px;line-height:24px;color:#525d76;">15:47:30</div>
<div class="t" style="left:1247.20px;top:1289.18px;font-size:24px;line-height:24px;color:#525d76;">15:48:00</div>
<div class="t" style="left:1414.10px;top:1289.18px;font-size:24px;line-height:24px;color:#525d76;">15:48:30</div>
<div class="t" style="left:551.99px;top:1320.43px;font-size:24px;line-height:24px;color:#525d76;">Feb 27, 2024</div>
<div class="a" style="left:1565.33px;top:778px;width:1109.33px;height:604px;border:2px solid #e6e6e6;border-radius:14px;box-sizing:border-box;background:#fff"></div>
<div class="t" style="left:1600.08px;top:817.30px;font-size:28px;line-height:28px;color:#525d76;letter-spacing:0.477px;">val_accuracy</div>
<svg class="a" style="left:2537.66px;top:816px;" width="28" height="32" viewBox="0 0 28 32" fill="none"><rect x="3.2" y="14.4" width="20.8" height="15.2" rx="2.5" stroke="#8590a6" stroke-width="2.4" fill="none" stroke-linecap="round" stroke-linejoin="round"/><path d="M8.3 4.8 C9.5 3 11.8 2.3 14.4 2.3 C17.8 2.3 20.2 5 20.2 8.6 L20.2 14.4" stroke="#8590a6" stroke-width="2.4" fill="none" stroke-linecap="round" stroke-linejoin="round"/><path d="M13.5 20.4 L13.5 23.1" stroke="#8590a6" stroke-width="2.4" fill="none" stroke-linecap="round" stroke-linejoin="round"/></svg>
<svg class="a" style="left:2584.66px;top:818px;" width="28" height="28" viewBox="0 0 28 28" fill="none"><path d="M2.6 10.7 L2.6 6.4 C2.6 3.6 4 1.8 6.8 1.8 L11.5 1.8 M17.8 1.8 L22.5 1.8 C25.3 1.8 26.7 3.6 26.7 6.4 L26.7 10.7 M26.7 17.2 L26.7 21.5 C26.7 24.3 25.3 26 22.5 26 L17.8 26 M11.5 26 L6.8 26 C4 26 2.6 24.3 2.6 21.5 L2.6 17.2" stroke="#8590a6" stroke-width="2.4" fill="none" stroke-linecap="round" stroke-linejoin="round"/></svg>
<div class="a" style="left:2636.36px;top:818.20px;width:5.6px;height:5.6px;border-radius:50%;background:#8590a6"></div>
<div class="a" style="left:2636.36px;top:828.90px;width:5.6px;height:5.6px;border-radius:50%;background:#8590a6"></div>
<div class="a" style="left:2636.36px;top:839.50px;width:5.6px;height:5.6px;border-radius:50%;background:#8590a6"></div>
<svg class="a" style="left:0;top:0" width="3840" height="2160" viewBox="0 0 3840 2160"><rect x="1659.90" y="984.59" width="953.50" height="2" fill="#ececec"/><rect x="1659.90" y="1099.11" width="953.50" height="2" fill="#ececec"/><rect x="1659.90" y="1212.85" width="953.50" height="2" fill="#ececec"/><rect x="1751.70" y="899.50" width="2" height="360.10" fill="#ececec"/><rect x="1919.80" y="899.50" width="2" height="360.10" fill="#ececec"/><rect x="2087.10" y="899.50" width="2" height="360.10" fill="#ececec"/><rect x="2254.80" y="899.50" width="2" height="360.10" fill="#ececec"/><rect x="2422.90" y="899.50" width="2" height="360.10" fill="#ececec"/><rect x="2589.80" y="899.50" width="2" height="360.10" fill="#ececec"/><polyline points="1659.9,1241.8 1727.8,1224.7 1796.2,1219.3 1855.2,1208.0 1913.4,1182.0 1971.6,1113.7 2029.8,1178.9 2088.0,1165.3 2152.9,1168.0 2214.2,1162.2 2272.4,1142.8 2330.7,1100.5 2388.9,1057.8 2447.1,1017.0 2502.7,954.9 2559.7,923.9" stroke="#17a0b4" stroke-width="3" fill="none" stroke-linejoin="round"/><circle cx="2559.7" cy="923.9" r="4.5" fill="#17a0b4"/></svg>
<div class="t" style="left:1599.14px;top:974.02px;font-size:24px;line-height:24px;color:#525d76;">0.3</div>
<div class="t" style="left:1599.14px;top:1088.54px;font-size:24px;line-height:24px;color:#525d76;">0.2</div>
<div class="t" style="left:1599.14px;top:1202.28px;font-size:24px;line-height:24px;color:#525d76;">0.1</div>
<div class="t" style="left:1706.00px;top:1289.18px;font-size:24px;line-height:24px;color:#525d76;">15:46:00</div>
<div class="t" style="left:1874.10px;top:1289.18px;font-size:24px;line-height:24px;color:#525d76;">15:46:30</div>
<div class="t" style="left:2041.40px;top:1289.18px;font-size:24px;line-height:24px;color:#525d76;">15:47:00</div>
<div class="t" style="left:2209.10px;top:1289.18px;font-size:24px;line-height:24px;color:#525d76;">15:47:30</div>
<div class="t" style="left:2377.20px;top:1289.18px;font-size:24px;line-height:24px;color:#525d76;">15:48:00</div>
<div class="t" style="left:2544.10px;top:1289.18px;font-size:24px;line-height:24px;color:#525d76;">15:48:30</div>
<div class="t" style="left:1681.99px;top:1320.43px;font-size:24px;line-height:24px;color:#525d76;">Feb 27, 2024</div>
<div class="a" style="left:2694.67px;top:778px;width:1109.33px;height:604px;border:2px solid #e6e6e6;border-radius:14px;box-sizing:border-box;background:#fff"></div>
<div class="t" style="left:2729.42px;top:817.30px;font-size:28px;line-height:28px;color:#525d76;letter-spacing:0.453px;">validate_batch_loss</div>
<svg class="a" style="left:3667.0px;top:816px;" width="28" height="32" viewBox="0 0 28 32" fill="none"><rect x="3.2" y="14.4" width="20.8" height="15.2" rx="2.5" stroke="#8590a6" stroke-width="2.4" fill="none" stroke-linecap="round" stroke-linejoin="round"/><path d="M8.3 4.8 C9.5 3 11.8 2.3 14.4 2.3 C17.8 2.3 20.2 5 20.2 8.6 L20.2 14.4" stroke="#8590a6" stroke-width="2.4" fill="none" stroke-linecap="round" stroke-linejoin="round"/><path d="M13.5 20.4 L13.5 23.1" stroke="#8590a6" stroke-width="2.4" fill="none" stroke-linecap="round" stroke-linejoin="round"/></svg>
<svg class="a" style="left:3714.0px;top:818px;" width="28" height="28" viewBox="0 0 28 28" fill="none"><path d="M2.6 10.7 L2.6 6.4 C2.6 3.6 4 1.8 6.8 1.8 L11.5 1.8 M17.8 1.8 L22.5 1.8 C25.3 1.8 26.7 3.6 26.7 6.4 L26.7 10.7 M26.7 17.2 L26.7 21.5 C26.7 24.3 25.3 26 22.5 26 L17.8 26 M11.5 26 L6.8 26 C4 26 2.6 24.3 2.6 21.5 L2.6 17.2" stroke="#8590a6" stroke-width="2.4" fill="none" stroke-linecap="round" stroke-linejoin="round"/></svg>
<div class="a" style="left:3765.70px;top:818.20px;width:5.6px;height:5.6px;border-radius:50%;background:#8590a6"></div>
<div class="a" style="left:3765.70px;top:828.90px;width:5.6px;height:5.6px;border-radius:50%;background:#8590a6"></div>
<div class="a" style="left:3765.70px;top:839.50px;width:5.6px;height:5.6px;border-radius:50%;background:#8590a6"></div>
<svg class="a" style="left:0;top:0" width="3840" height="2160" viewBox="0 0 3840 2160"><rect x="2768.00" y="925.58" width="971.75" height="2" fill="#ececec"/><rect x="2768.00" y="1029.23" width="971.75" height="2" fill="#ececec"/><rect x="2768.00" y="1133.66" width="971.75" height="2" fill="#ececec"/><rect x="2768.00" y="1238.86" width="971.75" height="2" fill="#ececec"/><rect x="2864.00" y="899.50" width="2" height="360.10" fill="#ececec"/><rect x="3034.80" y="899.50" width="2" height="360.10" fill="#ececec"/><rect x="3205.60" y="899.50" width="2" height="360.10" fill="#ececec"/><rect x="3376.80" y="899.50" width="2" height="360.10" fill="#ececec"/><rect x="3546.80" y="899.50" width="2" height="360.10" fill="#ececec"/><rect x="3718.00" y="899.50" width="2" height="360.10" fill="#ececec"/><polyline points="2768.0,1201.4 2837.3,1182.8 2907.0,1131.2 2967.1,1154.1 3026.4,1154.1 3085.8,1096.2 3145.1,1132.3 3204.5,977.0 3270.6,917.7 3333.1,940.9 3392.4,977.8 3451.8,1119.5 3511.2,1165.3 3570.5,1227.8 3627.1,1227.0 3685.3,1236.0" stroke="#5f7a88" stroke-width="3" fill="none" stroke-linejoin="round"/><circle cx="3685.3" cy="1236.0" r="4.5" fill="#5f7a88"/></svg>
<div class="t" style="left:2727.26px;top:915.02px;font-size:24px;line-height:24px;color:#525d76;">5</div>
<div class="t" style="left:2727.26px;top:1018.67px;font-size:24px;line-height:24px;color:#525d76;">4</div>
<div class="t" style="left:2727.26px;top:1123.09px;font-size:24px;line-height:24px;color:#525d76;">3</div>
<div class="t" style="left:2727.26px;top:1228.29px;font-size:24px;line-height:24px;color:#525d76;">2</div>
<div class="t" style="left:2818.30px;top:1289.18px;font-size:24px;line-height:24px;color:#525d76;">15:46:00</div>
<div class="t" style="left:2989.10px;top:1289.18px;font-size:24px;line-height:24px;color:#525d76;">15:46:30</div>
<div class="t" style="left:3159.90px;top:1289.18px;font-size:24px;line-height:24px;color:#525d76;">15:47:00</div>
<div class="t" style="left:3331.10px;top:1289.18px;font-size:24px;line-height:24px;color:#525d76;">15:47:30</div>
<div class="t" style="left:3501.10px;top:1289.18px;font-size:24px;line-height:24px;color:#525d76;">15:48:00</div>
<div class="t" style="left:3672.30px;top:1289.18px;font-size:24px;line-height:24px;color:#525d76;">15:48:30</div>
<div class="t" style="left:2794.29px;top:1320.43px;font-size:24px;line-height:24px;color:#525d76;">Feb 27, 2024</div>
<div class="a" style="left:436px;top:1402px;width:1109.33px;height:604px;border:2px solid #e6e6e6;border-radius:14px;box-sizing:border-box;background:#fff"></div>
<div class="t" style="left:470.75px;top:1441.30px;font-size:28px;line-height:28px;color:#525d76;letter-spacing:0.443px;">val_loss</div>
<svg class="a" style="left:1408.33px;top:1440px;" width="28" height="32" viewBox="0 0 28 32" fill="none"><rect x="3.2" y="14.4" width="20.8" height="15.2" rx="2.5" stroke="#8590a6" stroke-width="2.4" fill="none" stroke-linecap="round" stroke-linejoin="round"/><path d="M8.3 4.8 C9.5 3 11.8 2.3 14.4 2.3 C17.8 2.3 20.2 5 20.2 8.6 L20.2 14.4" stroke="#8590a6" stroke-width="2.4" fill="none" stroke-linecap="round" stroke-linejoin="round"/><path d="M13.5 20.4 L13.5 23.1" stroke="#8590a6" stroke-width="2.4" fill="none" stroke-linecap="round" stroke-linejoin="round"/></svg>
<svg class="a" style="left:1455.33px;top:1442px;" width="28" height="28" viewBox="0 0 28 28" fill="none"><path d="M2.6 10.7 L2.6 6.4 C2.6 3.6 4 1.8 6.8 1.8 L11.5 1.8 M17.8 1.8 L22.5 1.8 C25.3 1.8 26.7 3.6 26.7 6.4 L26.7 10.7 M26.7 17.2 L26.7 21.5 C26.7 24.3 25.3 26 22.5 26 L17.8 26 M11.5 26 L6.8 26 C4 26 2.6 24.3 2.6 21.5 L2.6 17.2" stroke="#8590a6" stroke-width="2.4" fill="none" stroke-linecap="round" stroke-linejoin="round"/></svg>
<div class="a" style="left:1507.03px;top:1442.20px;width:5.6px;height:5.6px;border-radius:50%;background:#8590a6"></div>
<div class="a" style="left:1507.03px;top:1452.90px;width:5.6px;height:5.6px;border-radius:50%;background:#8590a6"></div>
<div class="a" style="left:1507.03px;top:1463.50px;width:5.6px;height:5.6px;border-radius:50%;background:#8590a6"></div>
<svg class="a" style="left:0;top:0" width="3840" height="2160" viewBox="0 0 3840 2160"><rect x="509.70" y="1624.73" width="974.40" height="2" fill="#ececec"/><rect x="509.70" y="1745.85" width="974.40" height="2" fill="#ececec"/><rect x="509.70" y="1867.74" width="974.40" height="2" fill="#ececec"/><rect x="603.80" y="1523.50" width="2" height="360.10" fill="#ececec"/><rect x="775.00" y="1523.50" width="2" height="360.10" fill="#ececec"/><rect x="946.60" y="1523.50" width="2" height="360.10" fill="#ececec"/><rect x="1117.80" y="1523.50" width="2" height="360.10" fill="#ececec"/><rect x="1289.00" y="1523.50" width="2" height="360.10" fill="#ececec"/><rect x="1459.80" y="1523.50" width="2" height="360.10" fill="#ececec"/><polyline points="509.7,1823.3 579.1,1803.1 648.9,1737.9 709.1,1778.7 768.6,1786.1 828.0,1720.5 887.5,1750.3 946.9,1598.6 1013.2,1541.9 1075.7,1563.2 1135.2,1600.9 1194.7,1739.5 1254.2,1777.5 1313.6,1840.0 1370.3,1861.8 1428.6,1859.8" stroke="#4f5cf1" stroke-width="3" fill="none" stroke-linejoin="round"/><circle cx="1428.6" cy="1859.8" r="4.5" fill="#4f5cf1"/></svg>
<div class="t" style="left:468.96px;top:1614.16px;font-size:24px;line-height:24px;color:#525d76;">4</div>
<div class="t" style="left:468.96px;top:1735.28px;font-size:24px;line-height:24px;color:#525d76;">3</div>
<div class="t" style="left:468.96px;top:1857.18px;font-size:24px;line-height:24px;color:#525d76;">2</div>
<div class="t" style="left:558.10px;top:1913.18px;font-size:24px;line-height:24px;color:#525d76;">15:46:00</div>
<div class="t" style="left:729.30px;top:1913.18px;font-size:24px;line-height:24px;color:#525d76;">15:46:30</div>
<div class="t" style="left:900.90px;top:1913.18px;font-size:24px;line-height:24px;color:#525d76;">15:47:00</div>
<div class="t" style="left:1072.10px;top:1913.18px;font-size:24px;line-height:24px;color:#525d76;">15:47:30</div>
<div class="t" style="left:1243.30px;top:1913.18px;font-size:24px;line-height:24px;color:#525d76;">15:48:00</div>
<div class="t" style="left:1414.10px;top:1913.18px;font-size:24px;line-height:24px;color:#525d76;">15:48:30</div>
<div class="t" style="left:534.09px;top:1944.43px;font-size:24px;line-height:24px;color:#525d76;">Feb 27, 2024</div>
<div class="a" style="left:1565.33px;top:1402px;width:1109.33px;height:604px;border:2px solid #e6e6e6;border-radius:14px;box-sizing:border-box;background:#fff"></div>
<div class="t" style="left:1600.08px;top:1441.30px;font-size:28px;line-height:28px;color:#525d76;letter-spacing:0.436px;">loss</div>
<svg class="a" style="left:2537.66px;top:1440px;" width="28" height="32" viewBox="0 0 28 32" fill="none"><rect x="3.2" y="14.4" width="20.8" height="15.2" rx="2.5" stroke="#8590a6" stroke-width="2.4" fill="none" stroke-linecap="round" stroke-linejoin="round"/><path d="M8.3 4.8 C9.5 3 11.8 2.3 14.4 2.3 C17.8 2.3 20.2 5 20.2 8.6 L20.2 14.4" stroke="#8590a6" stroke-width="2.4" fill="none" stroke-linecap="round" stroke-linejoin="round"/><path d="M13.5 20.4 L13.5 23.1" stroke="#8590a6" stroke-width="2.4" fill="none" stroke-linecap="round" stroke-linejoin="round"/></svg>
<svg class="a" style="left:2584.66px;top:1442px;" width="28" height="28" viewBox="0 0 28 28" fill="none"><path d="M2.6 10.7 L2.6 6.4 C2.6 3.6 4 1.8 6.8 1.8 L11.5 1.8 M17.8 1.8 L22.5 1.8 C25.3 1.8 26.7 3.6 26.7 6.4 L26.7 10.7 M26.7 17.2 L26.7 21.5 C26.7 24.3 25.3 26 22.5 26 L17.8 26 M11.5 26 L6.8 26 C4 26 2.6 24.3 2.6 21.5 L2.6 17.2" stroke="#8590a6" stroke-width="2.4" fill="none" stroke-linecap="round" stroke-linejoin="round"/></svg>
<div class="a" style="left:2636.36px;top:1442.20px;width:5.6px;height:5.6px;border-radius:50%;background:#8590a6"></div>
<div class="a" style="left:2636.36px;top:1452.90px;width:5.6px;height:5.6px;border-radius:50%;background:#8590a6"></div>
<div class="a" style="left:2636.36px;top:1463.50px;width:5.6px;height:5.6px;border-radius:50%;background:#8590a6"></div>
<svg class="a" style="left:0;top:0" width="3840" height="2160" viewBox="0 0 3840 2160"><rect x="1659.90" y="1585.91" width="954.10" height="2" fill="#ececec"/><rect x="1659.90" y="1687.62" width="954.10" height="2" fill="#ececec"/><rect x="1659.90" y="1788.94" width="954.10" height="2" fill="#ececec"/><rect x="1751.70" y="1523.50" width="2" height="360.10" fill="#ececec"/><rect x="1919.80" y="1523.50" width="2" height="360.10" fill="#ececec"/><rect x="2087.10" y="1523.50" width="2" height="360.10" fill="#ececec"/><rect x="2254.80" y="1523.50" width="2" height="360.10" fill="#ececec"/><rect x="2422.90" y="1523.50" width="2" height="360.10" fill="#ececec"/><rect x="2589.80" y="1523.50" width="2" height="360.10" fill="#ececec"/><polyline points="1659.9,1541.9 1727.8,1680.9 1796.2,1706.5 1855.2,1714.6 1913.4,1744.5 1971.6,1752.7 2029.8,1772.5 2088.0,1786.1 2152.9,1791.5 2214.2,1803.9 2272.4,1814.0 2330.7,1826.4 2388.9,1833.4 2447.1,1846.6 2502.7,1859.0 2559.7,1859.8" stroke="#9457d5" stroke-width="3" fill="none" stroke-linejoin="round"/><circle cx="2559.7" cy="1859.8" r="4.5" fill="#9457d5"/></svg>
<div class="t" style="left:1599.14px;top:1575.34px;font-size:24px;line-height:24px;color:#525d76;">2.5</div>
<div class="t" style="left:1619.16px;top:1677.05px;font-size:24px;line-height:24px;color:#525d76;">2</div>
<div class="t" style="left:1599.14px;top:1778.37px;font-size:24px;line-height:24px;color:#525d76;">1.5</div>
<div class="t" style="left:1706.00px;top:1913.18px;font-size:24px;line-height:24px;color:#525d76;">15:46:00</div>
<div class="t" style="left:1874.10px;top:1913.18px;font-size:24px;line-height:24px;color:#525d76;">15:46:30</div>
<div class="t" style="left:2041.40px;top:1913.18px;font-size:24px;line-height:24px;color:#525d76;">15:47:00</div>
<div class="t" style="left:2209.10px;top:1913.18px;font-size:24px;line-height:24px;color:#525d76;">15:47:30</div>
<div class="t" style="left:2377.20px;top:1913.18px;font-size:24px;line-height:24px;color:#525d76;">15:48:00</div>
<div class="t" style="left:2544.10px;top:1913.18px;font-size:24px;line-height:24px;color:#525d76;">15:48:30</div>
<div class="t" style="left:1681.99px;top:1944.43px;font-size:24px;line-height:24px;color:#525d76;">Feb 27, 2024</div>
<div class="a" style="left:2694.67px;top:1402px;width:1109.33px;height:604px;border:2px solid #e6e6e6;border-radius:14px;box-sizing:border-box;background:#fff"></div>
<div class="t" style="left:2729.42px;top:1441.30px;font-size:28px;line-height:28px;color:#525d76;letter-spacing:0.483px;">epoch_duration</div>
<svg class="a" style="left:3667.0px;top:1440px;" width="28" height="32" viewBox="0 0 28 32" fill="none"><rect x="3.2" y="14.4" width="20.8" height="15.2" rx="2.5" stroke="#8590a6" stroke-width="2.4" fill="none" stroke-linecap="round" stroke-linejoin="round"/><path d="M8.3 4.8 C9.5 3 11.8 2.3 14.4 2.3 C17.8 2.3 20.2 5 20.2 8.6 L20.2 14.4" stroke="#8590a6" stroke-width="2.4" fill="none" stroke-linecap="round" stroke-linejoin="round"/><path d="M13.5 20.4 L13.5 23.1" stroke="#8590a6" stroke-width="2.4" fill="none" stroke-linecap="round" stroke-linejoin="round"/></svg>
<svg class="a" style="left:3714.0px;top:1442px;" width="28" height="28" viewBox="0 0 28 28" fill="none"><path d="M2.6 10.7 L2.6 6.4 C2.6 3.6 4 1.8 6.8 1.8 L11.5 1.8 M17.8 1.8 L22.5 1.8 C25.3 1.8 26.7 3.6 26.7 6.4 L26.7 10.7 M26.7 17.2 L26.7 21.5 C26.7 24.3 25.3 26 22.5 26 L17.8 26 M11.5 26 L6.8 26 C4 26 2.6 24.3 2.6 21.5 L2.6 17.2" stroke="#8590a6" stroke-width="2.4" fill="none" stroke-linecap="round" stroke-linejoin="round"/></svg>
<div class="a" style="left:3765.70px;top:1442.20px;width:5.6px;height:5.6px;border-radius:50%;background:#8590a6"></div>
<div class="a" style="left:3765.70px;top:1452.90px;width:5.6px;height:5.6px;border-radius:50%;background:#8590a6"></div>
<div class="a" style="left:3765.70px;top:1463.50px;width:5.6px;height:5.6px;border-radius:50%;background:#8590a6"></div>
<svg class="a" style="left:0;top:0" width="3840" height="2160" viewBox="0 0 3840 2160"><rect x="2781.90" y="1565.34" width="958.10" height="2" fill="#ececec"/><rect x="2781.90" y="1664.33" width="958.10" height="2" fill="#ececec"/><rect x="2781.90" y="1762.54" width="958.10" height="2" fill="#ececec"/><rect x="2781.90" y="1861.53" width="958.10" height="2" fill="#ececec"/><rect x="2874.90" y="1523.50" width="2" height="360.10" fill="#ececec"/><rect x="3043.70" y="1523.50" width="2" height="360.10" fill="#ececec"/><rect x="3211.80" y="1523.50" width="2" height="360.10" fill="#ececec"/><rect x="3380.70" y="1523.50" width="2" height="360.10" fill="#ececec"/><rect x="3549.60" y="1523.50" width="2" height="360.10" fill="#ececec"/><rect x="3718.00" y="1523.50" width="2" height="360.10" fill="#ececec"/><polyline points="2781.9,1541.9 2850.3,1757.3 2919.2,1749.6 2978.5,1831.9 3037.1,1850.5 3095.8,1836.9 3154.4,1843.9 3213.0,1850.5 3278.4,1785.3 3340.1,1809.0 3398.7,1838.9 3457.4,1843.5 3516.0,1857.5 3574.6,1836.1 3630.6,1866.0 3688.0,1847.8" stroke="#f0ae0b" stroke-width="3" fill="none" stroke-linejoin="round"/><circle cx="3688.0" cy="1847.8" r="4.5" fill="#f0ae0b"/></svg>
<div class="t" style="left:2727.81px;top:1554.77px;font-size:24px;line-height:24px;color:#525d76;">16</div>
<div class="t" style="left:2727.81px;top:1653.76px;font-size:24px;line-height:24px;color:#525d76;">14</div>
<div class="t" style="left:2727.81px;top:1751.97px;font-size:24px;line-height:24px;color:#525d76;">12</div>
<div class="t" style="left:2727.81px;top:1850.97px;font-size:24px;line-height:24px;color:#525d76;">10</div>
<div class="t" style="left:2829.20px;top:1913.18px;font-size:24px;line-height:24px;color:#525d76;">15:46:00</div>
<div class="t" style="left:2998.00px;top:1913.18px;font-size:24px;line-height:24px;color:#525d76;">15:46:30</div>
<div class="t" style="left:3166.10px;top:1913.18px;font-size:24px;line-height:24px;color:#525d76;">15:47:00</div>
<div class="t" style="left:3335.00px;top:1913.18px;font-size:24px;line-height:24px;color:#525d76;">15:47:30</div>
<div class="t" style="left:3503.90px;top:1913.18px;font-size:24px;line-height:24px;color:#525d76;">15:48:00</div>
<div class="t" style="left:3672.30px;top:1913.18px;font-size:24px;line-height:24px;color:#525d76;">15:48:30</div>
<div class="t" style="left:2805.19px;top:1944.43px;font-size:24px;line-height:24px;color:#525d76;">Feb 27, 2024</div>
<div class="a" style="left:436px;top:2026px;width:1109.33px;height:604px;border:2px solid #e6e6e6;border-radius:14px;box-sizing:border-box;background:#fff"></div>
<div class="t" style="left:470.75px;top:2065.30px;font-size:28px;line-height:28px;color:#525d76;letter-spacing:0.490px;">custom_metric</div>
<svg class="a" style="left:1455.33px;top:2066px;" width="28" height="28" viewBox="0 0 28 28" fill="none"><path d="M2.6 10.7 L2.6 6.4 C2.6 3.6 4 1.8 6.8 1.8 L11.5 1.8 M17.8 1.8 L22.5 1.8 C25.3 1.8 26.7 3.6 26.7 6.4 L26.7 10.7 M26.7 17.2 L26.7 21.5 C26.7 24.3 25.3 26 22.5 26 L17.8 26 M11.5 26 L6.8 26 C4 26 2.6 24.3 2.6 21.5 L2.6 17.2" stroke="#8590a6" stroke-width="2.4" fill="none" stroke-linecap="round" stroke-linejoin="round"/></svg>
<div class="a" style="left:1507.03px;top:2066.20px;width:5.6px;height:5.6px;border-radius:50%;background:#8590a6"></div>
<div class="a" style="left:1507.03px;top:2076.90px;width:5.6px;height:5.6px;border-radius:50%;background:#8590a6"></div>
<div class="a" style="left:1507.03px;top:2087.50px;width:5.6px;height:5.6px;border-radius:50%;background:#8590a6"></div>
<div class="a" style="left:1565.33px;top:2026px;width:1109.33px;height:604px;border:2px solid #e6e6e6;border-radius:14px;box-sizing:border-box;background:#fff"></div>
<div class="t" style="left:1600.08px;top:2065.30px;font-size:28px;line-height:28px;color:#525d76;letter-spacing:0.490px;">batch_accuracy</div>
<svg class="a" style="left:2537.66px;top:2064px;" width="28" height="32" viewBox="0 0 28 32" fill="none"><rect x="3.2" y="14.4" width="20.8" height="15.2" rx="2.5" stroke="#8590a6" stroke-width="2.4" fill="none" stroke-linecap="round" stroke-linejoin="round"/><path d="M8.3 4.8 C9.5 3 11.8 2.3 14.4 2.3 C17.8 2.3 20.2 5 20.2 8.6 L20.2 14.4" stroke="#8590a6" stroke-width="2.4" fill="none" stroke-linecap="round" stroke-linejoin="round"/><path d="M13.5 20.4 L13.5 23.1" stroke="#8590a6" stroke-width="2.4" fill="none" stroke-linecap="round" stroke-linejoin="round"/></svg>
<svg class="a" style="left:2584.66px;top:2066px;" width="28" height="28" viewBox="0 0 28 28" fill="none"><path d="M2.6 10.7 L2.6 6.4 C2.6 3.6 4 1.8 6.8 1.8 L11.5 1.8 M17.8 1.8 L22.5 1.8 C25.3 1.8 26.7 3.6 26.7 6.4 L26.7 10.7 M26.7 17.2 L26.7 21.5 C26.7 24.3 25.3 26 22.5 26 L17.8 26 M11.5 26 L6.8 26 C4 26 2.6 24.3 2.6 21.5 L2.6 17.2" stroke="#8590a6" stroke-width="2.4" fill="none" stroke-linecap="round" stroke-linejoin="round"/></svg>
<div class="a" style="left:2636.36px;top:2066.20px;width:5.6px;height:5.6px;border-radius:50%;background:#8590a6"></div>
<div class="a" style="left:2636.36px;top:2076.90px;width:5.6px;height:5.6px;border-radius:50%;background:#8590a6"></div>
<div class="a" style="left:2636.36px;top:2087.50px;width:5.6px;height:5.6px;border-radius:50%;background:#8590a6"></div>
<div class="a" style="left:2694.67px;top:2026px;width:1109.33px;height:604px;border:2px solid #e6e6e6;border-radius:14px;box-sizing:border-box;background:#fff"></div>
<div class="t" style="left:2729.42px;top:2065.30px;font-size:28px;line-height:28px;color:#525d76;letter-spacing:0.469px;">batch_loss</div>
<svg class="a" style="left:3667.0px;top:2064px;" width="28" height="32" viewBox="0 0 28 32" fill="none"><rect x="3.2" y="14.4" width="20.8" height="15.2" rx="2.5" stroke="#8590a6" stroke-width="2.4" fill="none" stroke-linecap="round" stroke-linejoin="round"/><path d="M8.3 4.8 C9.5 3 11.8 2.3 14.4 2.3 C17.8 2.3 20.2 5 20.2 8.6 L20.2 14.4" stroke="#8590a6" stroke-width="2.4" fill="none" stroke-linecap="round" stroke-linejoin="round"/><path d="M13.5 20.4 L13.5 23.1" stroke="#8590a6" stroke-width="2.4" fill="none" stroke-linecap="round" stroke-linejoin="round"/></svg>
<svg class="a" style="left:3714.0px;top:2066px;" width="28" height="28" viewBox="0 0 28 28" fill="none"><path d="M2.6 10.7 L2.6 6.4 C2.6 3.6 4 1.8 6.8 1.8 L11.5 1.8 M17.8 1.8 L22.5 1.8 C25.3 1.8 26.7 3.6 26.7 6.4 L26.7 10.7 M26.7 17.2 L26.7 21.5 C26.7 24.3 25.3 26 22.5 26 L17.8 26 M11.5 26 L6.8 26 C4 26 2.6 24.3 2.6 21.5 L2.6 17.2" stroke="#8590a6" stroke-width="2.4" fill="none" stroke-linecap="round" stroke-linejoin="round"/></svg>
<div class="a" style="left:3765.70px;top:2066.20px;width:5.6px;height:5.6px;border-radius:50%;background:#8590a6"></div>
<div class="a" style="left:3765.70px;top:2076.90px;width:5.6px;height:5.6px;border-radius:50%;background:#8590a6"></div>
<div class="a" style="left:3765.70px;top:2087.50px;width:5.6px;height:5.6px;border-radius:50%;background:#8590a6"></div>
<svg class="a" style="left:0;top:0" width="3840" height="2160" viewBox="0 0 3840 2160"><rect x="1020.00" y="2147.5" width="2" height="40" fill="#ececec"/><rect x="1811.90" y="2147.5" width="2" height="40" fill="#ececec"/><rect x="1969.00" y="2147.5" width="2" height="40" fill="#ececec"/><rect x="2124.80" y="2147.5" width="2" height="40" fill="#ececec"/><rect x="2281.60" y="2147.5" width="2" height="40" fill="#ececec"/><rect x="2437.80" y="2147.5" width="2" height="40" fill="#ececec"/><rect x="2594.50" y="2147.5" width="2" height="40" fill="#ececec"/><rect x="2924.00" y="2147.5" width="2" height="40" fill="#ececec"/><rect x="3083.00" y="2147.5" width="2" height="40" fill="#ececec"/><rect x="3242.80" y="2147.5" width="2" height="40" fill="#ececec"/><rect x="3402.70" y="2147.5" width="2" height="40" fill="#ececec"/><rect x="3562.50" y="2147.5" width="2" height="40" fill="#ececec"/><rect x="3722.80" y="2147.5" width="2" height="40" fill="#ececec"/></svg>
<div class="t" style="left:490.00px;top:2135.18px;font-size:24px;line-height:24px;color:#525d76;">1</div>
</body></html>
